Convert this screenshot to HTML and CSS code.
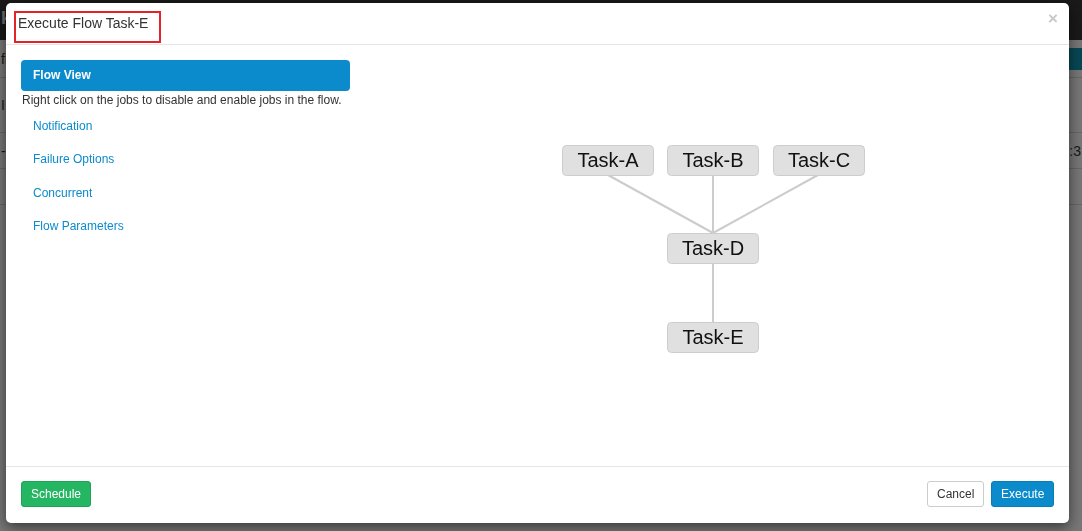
FILE: index.html
```html
<!DOCTYPE html>
<html>
<head>
<meta charset="utf-8">
<link rel="stylesheet" href="styles.css">
</head>
<body>
<div class="page">
  <div class="topbar"><span class="brand">k</span></div>
  <div class="pagebody">
    <div class="row r1"><span class="ptext">fi</span><span class="tealbtn"></span></div>
    <div class="row r2"><span class="ptext">I</span></div>
    <div class="row r3"><span class="ptext">-B</span><span class="ptext right">1:3</span></div>
    <div class="row r4"></div>
  </div>
</div>
<div class="overlay"></div>
<div class="modal">
  <div class="modal-header">
    <h4 class="modal-title">Execute Flow Task-E</h4>
    <span class="close">×</span>
  </div>
  <div class="modal-body">
    <div class="sidenav">
      <div class="nav-active">Flow View</div>
      <div class="nav-help">Right click on the jobs to disable and enable jobs in the flow.</div>
      <a class="nav-link">Notification</a>
      <a class="nav-link">Failure Options</a>
      <a class="nav-link">Concurrent</a>
      <a class="nav-link">Flow Parameters</a>
    </div>
    <div class="graph">
      <svg class="graph-svg" width="720" height="421" viewBox="0 0 720 421">
        <g class="edges">
          <line x1="258" y1="130" x2="363" y2="188"/>
          <line x1="363" y1="130" x2="363" y2="188"/>
          <line x1="468" y1="130" x2="363" y2="188"/>
          <line x1="363" y1="218" x2="363" y2="277"/>
        </g>
        <g class="nodes">
          <rect x="212.5" y="100.5" width="91" height="30" rx="4"/>
          <text x="258" y="122">Task-A</text>
          <rect x="317.5" y="100.5" width="91" height="30" rx="4"/>
          <text x="363" y="122">Task-B</text>
          <rect x="423.5" y="100.5" width="91" height="30" rx="4"/>
          <text x="469" y="122">Task-C</text>
          <rect x="317.5" y="188.5" width="91" height="30" rx="4"/>
          <text x="363" y="210">Task-D</text>
          <rect x="317.5" y="277.5" width="91" height="30" rx="4"/>
          <text x="363" y="299">Task-E</text>
        </g>
      </svg>
    </div>
  </div>
  <div class="modal-footer">
    <button class="btn btn-success">Schedule</button>
    <div class="footer-right">
      <button class="btn btn-default">Cancel</button>
      <button class="btn btn-primary">Execute</button>
    </div>
  </div>
</div>
</body>
</html>
```

FILE: styles.css
```css
* { box-sizing: border-box; }
html, body { margin: 0; padding: 0; height: 100%; overflow: hidden; }
body {
  font-family: "Liberation Sans", Arial, sans-serif;
  font-size: 12px;
  color: #333;
  background: #fff;
}
.page { height: 531px; display: flex; flex-direction: column; }
.topbar {
  height: 40px;
  background: #333;
  color: #ddd;
  padding: 8px 0 0 1px;
  font-weight: bold;
  font-size: 18px;
}
.pagebody { flex: 1; background: #eee; }
.row { height: 36px; border-bottom: 1px solid #ccc; position: relative; display: flex; align-items: center; }
.r1 { height: 38px; }
.r2 { height: 55px; }
.r3 { height: 36px; }
.ptext { color: #333; font-size: 14px; padding-left: 1px; }
.ptext.right { margin-left: auto; padding-right: 1px; }
.tealbtn {
  margin-left: auto;
  width: 20px; height: 22px;
  background: #0e8fa8;
}
.overlay {
  position: fixed; inset: 0;
  background: rgba(0,0,0,0.5);
}
.modal {
  position: fixed;
  left: 6px; top: 3px;
  width: 1063px; height: 520px;
  background: #fff;
  border-radius: 5px;
  box-shadow: 0 4px 14px rgba(0,0,0,0.55);
  display: flex;
  flex-direction: column;
}
.modal-header {
  height: 42px;
  border-bottom: 1px solid #e5e5e5;
  position: relative;
  padding: 8px 0 0 8px;
}
.modal-title {
  margin: 0;
  display: inline-block;
  font-weight: normal;
  font-size: 14px;
  color: #333;
  border: 2px solid #e3222b;
  width: 147px;
  height: 32px;
  padding: 2px 0 0 2px;
  line-height: 16px;
}
.close {
  position: absolute;
  right: 11px; top: 6px;
  font-size: 17px;
  font-weight: bold;
  color: #c8c8c8;
}
.modal-body {
  height: 421px;
  display: flex;
  padding: 15px 0 0 15px;
}
.sidenav { width: 329px; display: flex; flex-direction: column; }
.nav-active {
  height: 31px;
  background: #0b8bcc;
  color: #fff;
  font-weight: bold;
  border-radius: 4px;
  padding: 8px 12px;
  line-height: 15px;
}
.nav-help { padding: 2px 0 0 1px; line-height: 14px; height: 26px; }
.nav-link {
  color: #0b8bcc;
  padding: 1px 12px 0;
  height: 33.3px;
  line-height: 17px;
  cursor: pointer;
}
.graph { flex: 1; position: relative; }
.graph-svg { position: absolute; left: 0; top: -15px; }
.edges line { stroke: #cccccc; stroke-width: 2; }
.nodes rect { fill: #e0e0e0; stroke: #cdcdcd; stroke-width: 1; }
.nodes text {
  font-family: "Liberation Sans", Arial, sans-serif;
  font-size: 20px;
  fill: #111;
  text-anchor: middle;
}
.modal-footer {
  flex: 1;
  border-top: 1px solid #e5e5e5;
  display: flex;
  align-items: flex-start;
  padding: 14px 15px 0 15px;
}
.footer-right { margin-left: auto; display: flex; gap: 7px; }
.btn {
  font-family: "Liberation Sans", Arial, sans-serif;
  font-size: 12px;
  height: 26px;
  padding: 0 9px;
  border-radius: 3px;
  border: 1px solid transparent;
  cursor: pointer;
}
.btn-success { background: #24b662; border-color: #1fa457; color: #fff; width: 70px; }
.btn-default { background: #fff; border-color: #ccc; color: #333; width: 57px; }
.btn-primary { background: #0b8bcc; border-color: #0a7cb6; color: #fff; width: 63px; }
```
